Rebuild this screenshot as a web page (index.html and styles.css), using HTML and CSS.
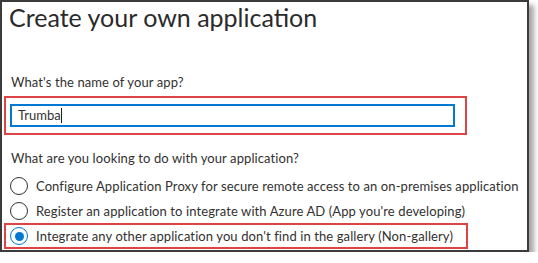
FILE: index.html
```html
<!DOCTYPE html>
<html lang="en">
<head>
  <meta charset="UTF-8">
  <title>Create your own application</title>
  <link rel="stylesheet" href="styles.css">
</head>
<body>
  <div class="frame">
    <h1 class="title">Create your own application</h1>

    <p class="label">What's the name of your app?</p>
    <div class="highlight name-box">
      <div class="text-input">Trumba<span class="caret"></span></div>
    </div>

    <p class="label question">What are you looking to do with your application?</p>
    <div class="option">
      <span class="radio"></span>
      <span>Configure Application Proxy for secure remote access to an on-premises application</span>
    </div>
    <div class="option">
      <span class="radio"></span>
      <span>Register an application to integrate with Azure AD (App you're developing)</span>
    </div>
    <div class="highlight option-box">
      <div class="option">
        <span class="radio checked"></span>
        <span>Integrate any other application you don't find in the gallery (Non-gallery)</span>
      </div>
    </div>
  </div>
</body>
</html>
```

FILE: styles.css
```css
body {
  margin: 0;
  background: #fff;
  font-family: Lato, sans-serif;
  color: #323130;
}

.frame {
  width: 523px;
  height: 248px;
  border: 2px solid #3b3b3b;
  box-shadow: 5px 5px 5px rgba(0, 0, 0, 0.35);
  padding: 0 0 0 2px;
  box-sizing: content-box;
  overflow: hidden;
  white-space: nowrap;
}

.title {
  margin: 0 0 0 5px;
  font-size: 25px;
  font-weight: 400;
  line-height: 30px;
  color: #2b2b2b;
}

.label {
  margin: 41px 0 0 7px;
  font-size: 13px;
  line-height: 18px;
  letter-spacing: 0.1px;
}

.question {
  margin: 14px 0 6px 7px;
}

.highlight {
  border: 2px solid #e04343;
}

.name-box {
  width: 463px;
  margin-top: 5px;
  padding: 6px 10px 6px 4px;
  box-sizing: border-box;
}

.text-input {
  height: 23px;
  border: 2px solid #0078d4;
  box-sizing: border-box;
  padding-left: 6px;
  font-size: 13px;
  line-height: 19px;
  display: flex;
  align-items: center;
}

.caret {
  width: 1px;
  height: 15px;
  background: #222;
}

.option {
  display: flex;
  align-items: center;
  gap: 8px;
  height: 25px;
  padding-left: 6px;
  font-size: 13px;
  letter-spacing: 0.1px;
}

.option-box {
  width: 464px;
  margin-top: 0;
  box-sizing: border-box;
}

.option-box .option {
  padding-left: 4px;
  height: 22px;
}

.radio {
  width: 18px;
  height: 18px;
  border: 1px solid #323130;
  border-radius: 50%;
  box-sizing: border-box;
  flex: none;
  display: flex;
  align-items: center;
  justify-content: center;
}

.radio.checked {
  border-color: #0078d4;
}

.radio.checked::after {
  content: "";
  width: 9px;
  height: 9px;
  border-radius: 50%;
  background: #0078d4;
}
```
